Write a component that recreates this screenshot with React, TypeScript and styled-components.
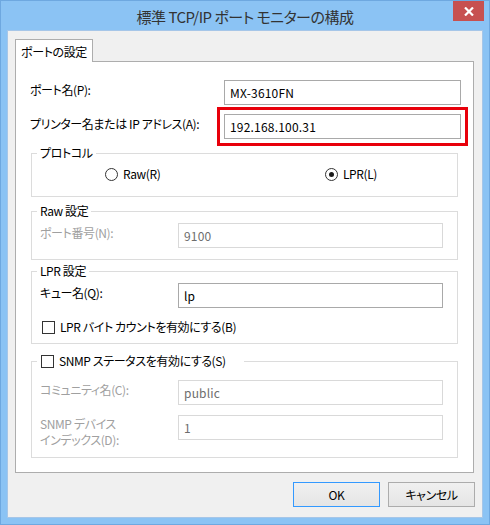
import React from 'react';
import styled, { createGlobalStyle } from 'styled-components';

const GlobalStyle = createGlobalStyle`
  html, body {
    margin: 0;
    padding: 0;
    background: #ffffff;
  }
  body {
    font-family: "Noto Sans CJK JP", "Noto Sans", sans-serif;
    font-size: 12px;
    font-feature-settings: "palt";
    letter-spacing: -0.4px;
  }
`;

const Window = styled.div`
  width: 490px;
  height: 525px;
  box-sizing: border-box;
  background: #8bc3f4;
  border: 1px solid #6ea8e0;
  display: flex;
  flex-direction: column;
`;

const TitleBar = styled.div`
  height: 29px;
  display: grid;
  grid-template-columns: 1fr auto 1fr;
  align-items: center;
`;

const Title = styled.div`
  grid-column: 2;
  font-size: 15px;
  letter-spacing: -0.5px;
  color: #333333;
  line-height: 29px;
  padding-top: 1px;
`;

const CloseButton = styled.div`
  grid-column: 3;
  justify-self: end;
  align-self: start;
  width: 31px;
  height: 20px;
  margin-right: 5px;
  background: #c75050;
  display: flex;
  align-items: center;
  justify-content: center;
`;

const Client = styled.div`
  flex: 1;
  margin: 0 6px 6px 6px;
  border: 1px solid #a6c6e8;
  background: #f0f0f0;
  padding: 8px 8px 8px 7px;
  display: flex;
  flex-direction: column;
`;

const TabStrip = styled.div`
  display: flex;
`;

const Tab = styled.div`
  width: 76px;
  height: 22px;
  border: 1px solid #adadad;
  border-bottom: none;
  background: #ffffff;
  margin-bottom: -1px;
  position: relative;
  z-index: 1;
  display: flex;
  align-items: center;
  justify-content: center;
  color: #000000;
`;

const Page = styled.div`
  border: 1px solid #adadad;
  background: #ffffff;
  display: flex;
  flex-direction: column;
  padding-bottom: 14px;
`;

const TopRow = styled.div<{ $top: number }>`
  display: grid;
  grid-template-columns: 194px 237px;
  grid-auto-rows: 25px;
  align-items: start;
  margin-top: ${({ $top }) => $top}px;
  padding-left: 14px;
`;

const GroupRow = styled.div<{ $top?: number }>`
  display: grid;
  grid-template-columns: 138px 265px;
  grid-auto-rows: 25px;
  align-items: start;
  margin-top: ${({ $top = 0 }) => $top}px;
`;

const Label = styled.div<{ $disabled?: boolean }>`
  padding-top: 2px;
  line-height: 16px;
  white-space: nowrap;
  color: ${({ $disabled }) => ($disabled ? '#a0a0a0' : '#000000')};
`;

const LabelLine = styled.span`
  display: block;
`;

const TwoLineLabel = styled(Label)`
  line-height: 16px;
  padding-top: 0;
  margin-top: 1px;
`;

const Field = styled.div<{ $disabled?: boolean; $highlight?: boolean }>`
  box-sizing: border-box;
  height: 25px;
  border: 1px solid ${({ $disabled }) => ($disabled ? '#d9d9d9' : '#a9a9a9')};
  background: #ffffff;
  padding: 0 5px;
  display: flex;
  align-items: center;
  letter-spacing: 0.2px;
  color: ${({ $disabled }) => ($disabled ? '#6d6d6d' : '#000000')};
  outline: ${({ $highlight }) => ($highlight ? '3px solid #e8000b' : 'none')};
  outline-offset: 4px;
`;

const Group = styled.fieldset<{ $top: number; $pad: string }>`
  margin: ${({ $top }) => $top}px 15px 0 15px;
  border: 1px solid #dcdcdc;
  padding: ${({ $pad }) => $pad};
  min-width: 0;
`;

const Legend = styled.legend<{ $right?: number }>`
  margin-left: -3px;
  padding: 0 ${({ $right = 3 }) => $right}px 0 3px;
  line-height: 16px;
  height: 16px;
  color: #000000;
  display: flex;
  align-items: center;
`;

const RadioRow = styled.div`
  display: flex;
  padding-left: 65px;
  height: 16px;
  align-items: center;
`;

const Choice = styled.label<{ $width?: number }>`
  display: flex;
  align-items: center;
  gap: 5px;
  width: ${({ $width }) => ($width ? `${$width}px` : 'auto')};
  line-height: 16px;
  white-space: nowrap;
  color: #000000;
`;

const RadioMark = styled.span<{ $checked?: boolean }>`
  box-sizing: border-box;
  width: 13px;
  height: 13px;
  border-radius: 50%;
  border: 1px solid #333333;
  background: #ffffff;
  display: flex;
  align-items: center;
  justify-content: center;
  &::after {
    content: '';
    width: 5px;
    height: 5px;
    border-radius: 50%;
    background: ${({ $checked }) => ($checked ? '#1a1a1a' : 'transparent')};
  }
`;

const CheckMark = styled.span`
  box-sizing: border-box;
  width: 13px;
  height: 13px;
  border: 1px solid #333333;
  background: #ffffff;
`;

const CheckRow = styled(Choice)`
  margin-top: 11px;
  margin-left: 2px;
  height: 16px;
`;

const LegendCheck = styled(Choice)`
  margin-left: 1px;
`;

const ButtonRow = styled.div`
  display: flex;
  justify-content: flex-end;
  gap: 8px;
  margin-top: 9px;
  margin-right: -1px;
`;

const Button = styled.div<{ $default?: boolean }>`
  box-sizing: border-box;
  width: 87px;
  height: 25px;
  border: 1px solid ${({ $default }) => ($default ? '#3399ff' : '#acacac')};
  background: linear-gradient(#f0f0f0, #e5e5e5);
  display: flex;
  align-items: center;
  justify-content: center;
  color: #000000;
`;

export default function App() {
  return (
    <>
      <GlobalStyle />
      <Window>
        <TitleBar>
          <Title>標準 TCP/IP ポート モニターの構成</Title>
          <CloseButton>
            <svg width="10" height="9" viewBox="0 0 10 9">
              <path d="M1 0.5 L9 8.5 M9 0.5 L1 8.5" stroke="#ffffff" strokeWidth="2.2" />
            </svg>
          </CloseButton>
        </TitleBar>
        <Client>
          <TabStrip>
            <Tab>ポートの設定</Tab>
          </TabStrip>
          <Page>
            <TopRow $top={18}>
              <Label>ポート名(P):</Label>
              <Field>MX-3610FN</Field>
            </TopRow>
            <TopRow $top={9}>
              <Label>プリンター名または IP アドレス(A):</Label>
              <Field $highlight>192.168.100.31</Field>
            </TopRow>

            <Group $top={6} $pad="5px 14px 14px 8px">
              <Legend>プロトコル</Legend>
              <RadioRow>
                <Choice $width={220}>
                  <RadioMark />
                  Raw(R)
                </Choice>
                <Choice>
                  <RadioMark $checked />
                  LPR(L)
                </Choice>
              </RadioRow>
            </Group>

            <Group $top={6} $pad="4px 14px 11px 8px">
              <Legend>Raw 設定</Legend>
              <GroupRow>
                <Label $disabled>ポート番号(N):</Label>
                <Field $disabled>9100</Field>
              </GroupRow>
            </Group>

            <Group $top={3} $pad="4px 14px 8px 8px">
              <Legend>LPR 設定</Legend>
              <GroupRow>
                <Label>キュー名(Q):</Label>
                <Field>lp</Field>
              </GroupRow>
              <CheckRow>
                <CheckMark />
                LPR バイト カウントを有効にする(B)
              </CheckRow>
            </Group>

            <Group $top={9} $pad="11px 14px 17px 8px">
              <Legend $right={18}>
                <LegendCheck>
                  <CheckMark />
                  SNMP ステータスを有効にする(S)
                </LegendCheck>
              </Legend>
              <GroupRow>
                <Label $disabled>コミュニティ名(C):</Label>
                <Field $disabled>public</Field>
              </GroupRow>
              <GroupRow $top={10}>
                <TwoLineLabel $disabled>
                  <LabelLine>SNMP デバイス</LabelLine>
                  <LabelLine>インデックス(D):</LabelLine>
                </TwoLineLabel>
                <Field $disabled>1</Field>
              </GroupRow>
            </Group>
          </Page>
          <ButtonRow>
            <Button $default>OK</Button>
            <Button>キャンセル</Button>
          </ButtonRow>
        </Client>
      </Window>
    </>
  );
}
